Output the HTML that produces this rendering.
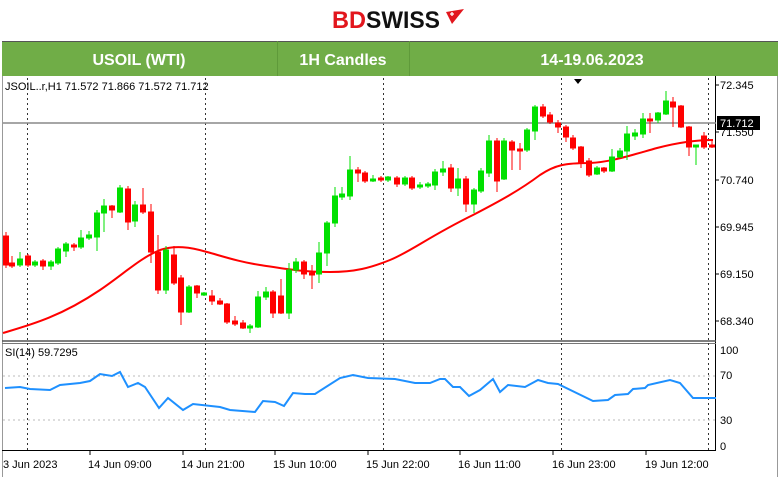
<!DOCTYPE html>
<html><head><meta charset="utf-8"><style>
html,body{margin:0;padding:0;background:#fff;width:780px;height:477px;overflow:hidden}
svg{display:block}
text{font-family:"Liberation Sans",sans-serif}
</style></head><body>
<svg width="780" height="477" viewBox="0 0 780 477" xmlns="http://www.w3.org/2000/svg">
<rect width="780" height="477" fill="#fff"/>
<text x="332" y="28" font-size="24" font-weight="bold" fill="#e2161d" textLength="34" lengthAdjust="spacingAndGlyphs">BD</text>
<text x="366" y="28" font-size="24" font-weight="bold" fill="#111" textLength="74" lengthAdjust="spacingAndGlyphs">SWISS</text>
<path d="M446 12 L464 9 L452 24 Z" fill="#e2161d"/>
<path d="M450 14 l4 0 M452 12 l0 4" stroke="#fff" stroke-width="1.3"/>
<rect x="2" y="41" width="776" height="35" fill="#70ad47"/>
<line x1="2" y1="41.5" x2="778" y2="41.5" stroke="#555"/>
<line x1="277.5" y1="41" x2="277.5" y2="76" stroke="#5f9a3a"/>
<line x1="409.5" y1="41" x2="409.5" y2="76" stroke="#5f9a3a"/>
<text x="139" y="65" font-size="16" font-weight="bold" fill="#fff" text-anchor="middle">USOIL (WTI)</text>
<text x="343" y="65" font-size="16" font-weight="bold" fill="#fff" text-anchor="middle">1H Candles</text>
<text x="592" y="65" font-size="16" font-weight="bold" fill="#fff" text-anchor="middle">14-19.06.2023</text>
<line x1="2.5" y1="76" x2="2.5" y2="477" stroke="#999"/>
<line x1="777.5" y1="76" x2="777.5" y2="477" stroke="#999"/>
<line x1="715.5" y1="76" x2="715.5" y2="450" stroke="#000"/>
<line x1="2" y1="341" x2="716" y2="341" stroke="#555" stroke-width="1.5"/>
<line x1="2" y1="343.5" x2="716" y2="343.5" stroke="#777"/>
<line x1="2" y1="450.5" x2="716" y2="450.5" stroke="#000"/>
<g stroke="#333" stroke-dasharray="2,3">
<line x1="27.5" y1="78" x2="27.5" y2="450"/><line x1="205.5" y1="78" x2="205.5" y2="450"/>
<line x1="383.5" y1="78" x2="383.5" y2="450"/><line x1="561.5" y1="78" x2="561.5" y2="450"/>
<line x1="708.5" y1="78" x2="708.5" y2="450"/>
</g>
<g stroke="#bbb" stroke-dasharray="2,3"><line x1="3" y1="376" x2="715" y2="376"/><line x1="3" y1="420" x2="715" y2="420"/></g>
<line x1="3" y1="123" x2="716" y2="123" stroke="#888" stroke-width="1.5"/>
<text x="5" y="90" font-size="11" fill="#000">JSOIL..r,H1  71.572 71.866 71.572 71.712</text>
<path d="M574 79 l8 0 l-4 5z" fill="#000"/>
<g font-size="11" fill="#000">
<text x="720" y="89">72.345</text><text x="720" y="136">71.550</text><text x="720" y="184">70.740</text>
<text x="720" y="231">69.945</text><text x="720" y="278">69.150</text><text x="720" y="325">68.340</text>
<text x="720" y="354">100</text><text x="720" y="379">70</text><text x="720" y="424">30</text><text x="720" y="450">0</text>
</g>
<g stroke="#000"><line x1="716" y1="85" x2="719" y2="85"/><line x1="716" y1="132" x2="719" y2="132"/><line x1="716" y1="180" x2="719" y2="180"/><line x1="716" y1="227" x2="719" y2="227"/><line x1="716" y1="274" x2="719" y2="274"/><line x1="716" y1="321" x2="719" y2="321"/></g>
<rect x="717" y="116" width="43" height="14" fill="#000"/>
<text x="720" y="127" font-size="11" fill="#fff">71.712</text>
<text x="5" y="356" font-size="11" fill="#000">SI(14) 59.7295</text>
<g font-size="11" fill="#000">
<text x="3" y="468">3 Jun 2023</text><text x="88" y="468">14 Jun 09:00</text><text x="181" y="468">14 Jun 21:00</text>
<text x="273" y="468">15 Jun 10:00</text><text x="366" y="468">15 Jun 22:00</text><text x="458" y="468">16 Jun 11:00</text>
<text x="552" y="468">16 Jun 23:00</text><text x="645" y="468">19 Jun 12:00</text>
</g>
<g stroke="#000"><line x1="90" y1="451" x2="90" y2="455"/><line x1="183" y1="451" x2="183" y2="455"/><line x1="275" y1="451" x2="275" y2="455"/><line x1="368" y1="451" x2="368" y2="455"/><line x1="460" y1="451" x2="460" y2="455"/><line x1="553" y1="451" x2="553" y2="455"/><line x1="646" y1="451" x2="646" y2="455"/></g>
<path fill="none" stroke="#f00" stroke-width="2" d="M3,333 C30,325 60,317 100,290 C125,273 140,258 160,250 C175,245 190,247 207,252 C225,257 240,262 260,265 C280,268 300,272 330,272 C355,272 370,268 390,260 C410,252 430,236 473,215 C500,201 520,190 540,175 C555,165 565,163 590,163 C610,162 625,157 657,148 C680,142 700,140 713,140"/>
<g stroke="#00e000" fill="#00e000">
<line x1="20" y1="252" x2="20" y2="267"/><rect x="17.5" y="259" width="5" height="6"/>
<line x1="35" y1="260" x2="35" y2="267"/><rect x="32.5" y="262" width="5" height="3"/>
<line x1="51" y1="260" x2="51" y2="270"/><rect x="48.5" y="262" width="5" height="4"/>
<line x1="58" y1="247" x2="58" y2="265"/><rect x="55.5" y="249" width="5" height="14"/>
<line x1="66" y1="242" x2="66" y2="257"/><rect x="63.5" y="244" width="5" height="7"/>
<line x1="81" y1="230" x2="81" y2="249"/><rect x="78.5" y="238" width="5" height="9"/>
<line x1="89" y1="231" x2="89" y2="240"/><rect x="86.5" y="235" width="5" height="3"/>
<line x1="97" y1="210" x2="97" y2="251"/><rect x="94.5" y="213" width="5" height="24"/>
<line x1="104" y1="199" x2="104" y2="232"/><rect x="101.5" y="206" width="5" height="7"/>
<line x1="120" y1="185" x2="120" y2="213"/><rect x="117.5" y="188" width="5" height="24"/>
<line x1="135" y1="201" x2="135" y2="227"/><rect x="132.5" y="205" width="5" height="16"/>
<line x1="166" y1="246" x2="166" y2="294"/><rect x="163.5" y="250" width="5" height="40"/>
<line x1="189" y1="285" x2="189" y2="313"/><rect x="186.5" y="287" width="5" height="25"/>
<line x1="204" y1="292" x2="204" y2="296"/><rect x="201.5" y="293" width="5" height="2"/>
<line x1="250" y1="324" x2="250" y2="333"/><rect x="247.5" y="326" width="5" height="2"/>
<line x1="258" y1="291" x2="258" y2="328"/><rect x="255.5" y="297" width="5" height="30"/>
<line x1="266" y1="287" x2="266" y2="300"/><rect x="263.5" y="292" width="5" height="5"/>
<line x1="289" y1="263" x2="289" y2="319"/><rect x="286.5" y="270" width="5" height="43"/>
<line x1="296" y1="258" x2="296" y2="273"/><rect x="293.5" y="262" width="5" height="8"/>
<line x1="319" y1="242" x2="319" y2="283"/><rect x="316.5" y="253" width="5" height="21"/>
<line x1="327" y1="221" x2="327" y2="266"/><rect x="324.5" y="223" width="5" height="30"/>
<line x1="335" y1="187" x2="335" y2="227"/><rect x="332.5" y="196" width="5" height="27"/>
<line x1="342" y1="187" x2="342" y2="200"/><rect x="339.5" y="194" width="5" height="3"/>
<line x1="350" y1="156" x2="350" y2="200"/><rect x="347.5" y="170" width="5" height="26"/>
<line x1="373" y1="175" x2="373" y2="182"/><rect x="370.5" y="179" width="5" height="2"/>
<line x1="388" y1="176" x2="388" y2="182"/><rect x="385.5" y="177" width="5" height="3"/>
<line x1="405" y1="176" x2="405" y2="186"/><rect x="402.5" y="178" width="5" height="6"/>
<line x1="420" y1="182" x2="420" y2="189"/><rect x="417.5" y="185" width="5" height="2"/>
<line x1="428" y1="182" x2="428" y2="188"/><rect x="425.5" y="184" width="5" height="2"/>
<line x1="435" y1="169" x2="435" y2="190"/><rect x="432.5" y="172" width="5" height="13"/>
<line x1="443" y1="161" x2="443" y2="176"/><rect x="440.5" y="169" width="5" height="3"/>
<line x1="458" y1="168" x2="458" y2="196"/><rect x="455.5" y="179" width="5" height="9"/>
<line x1="474" y1="188" x2="474" y2="213"/><rect x="471.5" y="190" width="5" height="14"/>
<line x1="481" y1="168" x2="481" y2="193"/><rect x="478.5" y="171" width="5" height="20"/>
<line x1="489" y1="135" x2="489" y2="177"/><rect x="486.5" y="141" width="5" height="32"/>
<line x1="504" y1="138" x2="504" y2="180"/><rect x="501.5" y="141" width="5" height="38"/>
<line x1="527" y1="128" x2="527" y2="152"/><rect x="524.5" y="130" width="5" height="20"/>
<line x1="535" y1="105" x2="535" y2="140"/><rect x="532.5" y="107" width="5" height="24"/>
<line x1="597" y1="166" x2="597" y2="175"/><rect x="594.5" y="168" width="5" height="6"/>
<line x1="612" y1="149" x2="612" y2="172"/><rect x="609.5" y="157" width="5" height="14"/>
<line x1="620" y1="148" x2="620" y2="158"/><rect x="617.5" y="151" width="5" height="6"/>
<line x1="627" y1="126" x2="627" y2="160"/><rect x="624.5" y="134" width="5" height="17"/>
<line x1="635" y1="129" x2="635" y2="140"/><rect x="632.5" y="133" width="5" height="3"/>
<line x1="643" y1="113" x2="643" y2="138"/><rect x="640.5" y="119" width="5" height="15"/>
<line x1="658" y1="112" x2="658" y2="123"/><rect x="655.5" y="113" width="5" height="7"/>
<line x1="666" y1="91" x2="666" y2="115"/><rect x="663.5" y="101" width="5" height="13"/>
<line x1="696" y1="146" x2="696" y2="165"/><rect x="693.5" y="145" width="5" height="2"/>
</g>
<g stroke="#f00" fill="#f00">
<line x1="6" y1="232" x2="6" y2="268"/><rect x="3.5" y="236" width="5" height="29"/>
<line x1="12" y1="256" x2="12" y2="268"/><rect x="9.5" y="263" width="5" height="3"/>
<line x1="28" y1="254" x2="28" y2="267"/><rect x="25.5" y="256" width="5" height="9"/>
<line x1="43" y1="259" x2="43" y2="270"/><rect x="40.5" y="261" width="5" height="5"/>
<line x1="74" y1="243" x2="74" y2="251"/><rect x="71.5" y="245" width="5" height="2"/>
<line x1="112" y1="205" x2="112" y2="218"/><rect x="109.5" y="206" width="5" height="4"/>
<line x1="128" y1="186" x2="128" y2="230"/><rect x="125.5" y="189" width="5" height="33"/>
<line x1="143" y1="188" x2="143" y2="214"/><rect x="140.5" y="205" width="5" height="7"/>
<line x1="151" y1="204" x2="151" y2="263"/><rect x="148.5" y="212" width="5" height="40"/>
<line x1="158" y1="235" x2="158" y2="294"/><rect x="155.5" y="252" width="5" height="38"/>
<line x1="174" y1="246" x2="174" y2="285"/><rect x="171.5" y="255" width="5" height="28"/>
<line x1="181" y1="275" x2="181" y2="325"/><rect x="178.5" y="278" width="5" height="34"/>
<line x1="197" y1="285" x2="197" y2="298"/><rect x="194.5" y="286" width="5" height="7"/>
<line x1="212" y1="290" x2="212" y2="305"/><rect x="209.5" y="296" width="5" height="5"/>
<line x1="220" y1="298" x2="220" y2="305"/><rect x="217.5" y="301" width="5" height="3"/>
<line x1="227" y1="303" x2="227" y2="324"/><rect x="224.5" y="304" width="5" height="18"/>
<line x1="235" y1="316" x2="235" y2="326"/><rect x="232.5" y="321" width="5" height="3"/>
<line x1="243" y1="320" x2="243" y2="329"/><rect x="240.5" y="323" width="5" height="5"/>
<line x1="273" y1="290" x2="273" y2="318"/><rect x="270.5" y="292" width="5" height="21"/>
<line x1="281" y1="279" x2="281" y2="314"/><rect x="278.5" y="296" width="5" height="17"/>
<line x1="304" y1="260" x2="304" y2="279"/><rect x="301.5" y="262" width="5" height="12"/>
<line x1="312" y1="265" x2="312" y2="289"/><rect x="309.5" y="273" width="5" height="2"/>
<line x1="358" y1="167" x2="358" y2="182"/><rect x="355.5" y="170" width="5" height="3"/>
<line x1="365" y1="171" x2="365" y2="183"/><rect x="362.5" y="173" width="5" height="8"/>
<line x1="381" y1="176" x2="381" y2="182"/><rect x="378.5" y="178" width="5" height="2"/>
<line x1="397" y1="176" x2="397" y2="187"/><rect x="394.5" y="178" width="5" height="6"/>
<line x1="412" y1="176" x2="412" y2="190"/><rect x="409.5" y="178" width="5" height="10"/>
<line x1="451" y1="164" x2="451" y2="192"/><rect x="448.5" y="168" width="5" height="20"/>
<line x1="466" y1="176" x2="466" y2="212"/><rect x="463.5" y="179" width="5" height="25"/>
<line x1="497" y1="138" x2="497" y2="192"/><rect x="494.5" y="141" width="5" height="40"/>
<line x1="512" y1="140" x2="512" y2="170"/><rect x="509.5" y="142" width="5" height="8"/>
<line x1="520" y1="143" x2="520" y2="170"/><rect x="517.5" y="149" width="5" height="2"/>
<line x1="543" y1="104" x2="543" y2="118"/><rect x="540.5" y="107" width="5" height="9"/>
<line x1="550" y1="112" x2="550" y2="124"/><rect x="547.5" y="115" width="5" height="7"/>
<line x1="558" y1="120" x2="558" y2="133"/><rect x="555.5" y="123" width="5" height="4"/>
<line x1="566" y1="125" x2="566" y2="142"/><rect x="563.5" y="127" width="5" height="10"/>
<line x1="573" y1="135" x2="573" y2="150"/><rect x="570.5" y="138" width="5" height="10"/>
<line x1="581" y1="146" x2="581" y2="168"/><rect x="578.5" y="147" width="5" height="16"/>
<line x1="589" y1="158" x2="589" y2="177"/><rect x="586.5" y="161" width="5" height="14"/>
<line x1="604" y1="167" x2="604" y2="173"/><rect x="601.5" y="168" width="5" height="3"/>
<line x1="650" y1="113" x2="650" y2="133"/><rect x="647.5" y="119" width="5" height="2"/>
<line x1="673" y1="97" x2="673" y2="127"/><rect x="670.5" y="102" width="5" height="5"/>
<line x1="681" y1="105" x2="681" y2="128"/><rect x="678.5" y="106" width="5" height="21"/>
<line x1="689" y1="126" x2="689" y2="156"/><rect x="686.5" y="127" width="5" height="20"/>
<line x1="704" y1="132" x2="704" y2="149"/><rect x="701.5" y="136" width="5" height="11"/>
<line x1="712" y1="140" x2="712" y2="148"/><rect x="709.5" y="145" width="5" height="2"/>
</g>
<polyline fill="none" stroke="#1e90ff" stroke-width="2" points="5,388 20,387 30,389 50,390 60,385 80,383 90,381 100,374 112,376 120,372 128,387 138,383 145,387 159,408 168,398 183,410 193,404 220,407 230,410 255,412 263,401 275,402 284,406 293,393 305,394 315,394 340,378 353,375 368,378 395,379 415,383 430,383 440,379 445,379 453,387 460,387 469,396 480,390 493,379 500,392 508,385 525,387 538,380 548,383 558,384 593,401 608,400 615,395 628,394 633,389 645,388 648,385 670,380 680,383 693,398 716,398"/>
</svg>
</body></html>
